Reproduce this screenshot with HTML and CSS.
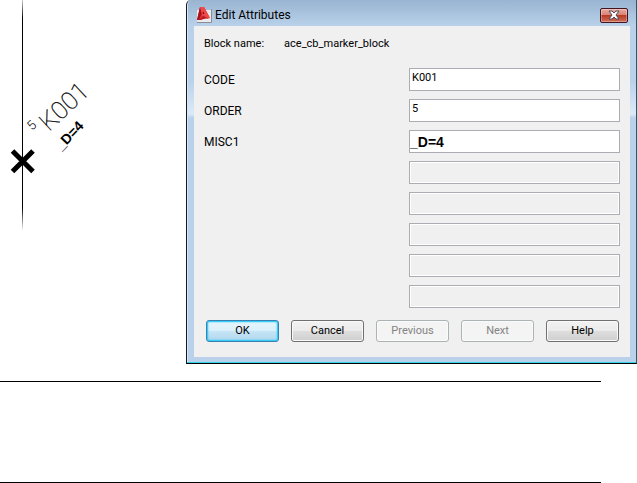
FILE: index.html
```html
<!DOCTYPE html>
<html lang="en">
<head>
    <meta charset="UTF-8">
    <meta name="viewport" content="width=device-width, initial-scale=1.0">
    <title>Edit Attributes</title>
    <link rel="stylesheet" href="styles.css">
</head>
<body>
    <main class="figure">
        <svg class="drawing" width="186" height="240" viewBox="0 0 186 240" role="img" aria-label="Marker block K001">
            <defs>
                <linearGradient id="wire-fade" x1="0" y1="0" x2="0" y2="1">
                    <stop offset="0" stop-color="#000" stop-opacity="0.2"/>
                    <stop offset="0.08" stop-color="#000"/>
                    <stop offset="0.9" stop-color="#000"/>
                    <stop offset="1" stop-color="#000" stop-opacity="0"/>
                </linearGradient>
            </defs>
            <rect x="22" y="0" width="1" height="231" fill="url(#wire-fade)"/>
            <path class="cross" d="M12.500 151 L33 171.500 M33 151 L12.500 171.500"/>
            <text class="marker-order" transform="translate(32 131) rotate(-43)">5</text>
            <text class="marker-code" transform="translate(49 132) rotate(-43)">K001</text>
            <text class="marker-misc" transform="translate(61 151) rotate(-46)">_D=4</text>
        </svg>

        <form class="dialog">
            <header class="titlebar">
                <svg class="app-icon" width="17" height="17" viewBox="0 0 17 17" aria-hidden="true">
                    <path d="M1 3H15V15H1Z" fill="#e9eaec"/>
                    <path d="M15.500 2V15.500H1" fill="none" stroke="#8a8d91"/>
                    <path d="M1 13L4 0H8L14 11L9 10L5 13Z" fill="#d9282f"/>
                    <path d="M1 13L4 0L6 9L4 13Z" fill="#a91219"/>
                    <path d="M4 0H8L14 11L11 12L7 8L3 13L6 7Z" fill="#ee4a4d"/>
                    <path d="M7 4L8.500 7L6.500 7Z" fill="#8e0c12"/>
                    <path d="M7 9L12 11L4 13Z" fill="#bd1820"/>
                </svg>
                <h1>Edit Attributes</h1>
                <button type="button" class="close" aria-label="Close">
                    <svg width="12" height="10" viewBox="0 0 12 10" aria-hidden="true">
                        <path d="M1 1H4L6 3L8 1H11L8 5L11 9H8L6 7L4 9H1L4 5Z" fill="#fff" stroke="#4b4c5c"/>
                    </svg>
                </button>
            </header>

            <div class="content">
                <p class="block-name"><span>Block name:</span><span>ace_cb_marker_block</span></p>

                <div class="fields">
                    <label for="code">CODE</label>
                    <input id="code" type="text" value="K001">
                    <label for="order">ORDER</label>
                    <input id="order" type="text" value="5">
                    <label for="misc1">MISC1</label>
                    <input id="misc1" class="edited" type="text" value="_D=4">
                    <input type="text" aria-label="Attribute 4" disabled>
                    <input type="text" aria-label="Attribute 5" disabled>
                    <input type="text" aria-label="Attribute 6" disabled>
                    <input type="text" aria-label="Attribute 7" disabled>
                    <input type="text" aria-label="Attribute 8" disabled>
                </div>

                <div class="buttons">
                    <button type="button" class="btn default">OK</button>
                    <button type="button" class="btn">Cancel</button>
                    <button type="button" class="btn" disabled>Previous</button>
                    <button type="button" class="btn" disabled>Next</button>
                    <button type="button" class="btn">Help</button>
                </div>
            </div>
        </form>
    </main>

    <div class="rules">
        <hr>
        <hr>
    </div>
</body>
</html>
```

FILE: styles.css
```css
:root {
    --glass: #b9d1ea;
    --face: #f0f0f0;
    --field-border: #abadb3;
}

* {
    margin: 0;
    padding: 0;
    box-sizing: border-box;
}

body {
    background: #fff;
    color: #000;
    font-family: Roboto, Arial, sans-serif;
    font-size: 11px;
    line-height: 14px;
}

.figure {
    display: grid;
    grid-template-columns: 186px 1fr;
}

/* Marker drawing */
.drawing {
    display: block;
}

.cross {
    fill: none;
    stroke: #000;
    stroke-width: 5;
}

.marker-code {
    font: 100 25px Roboto, sans-serif;
    stroke: #000;
    stroke-width: 0.3;
}

.marker-order {
    font: 300 13px Roboto, sans-serif;
}

.marker-misc {
    font: bold 14px "Liberation Sans", sans-serif;
}

/* Dialog window */
.dialog {
    padding: 0 6px 6px 7px;
    border: 1px solid #17616c;
    border-top: 0;
    border-left-color: #111820;
    border-bottom: 1px solid #000;
    border-radius: 5px 0 0 0;
    background: linear-gradient(#99b4d1, var(--glass) 26px, var(--glass) 80px, #dceaf7 114px, var(--glass) 118px);
    box-shadow: inset 0 -1px #37d3ea, inset 1px 0 #d8e8f7;
}

.titlebar {
    display: flex;
    align-items: center;
    height: 26px;
    padding: 6px 2px 2px;
}

.app-icon {
    flex: none;
}

.titlebar h1 {
    flex: 1;
    padding-left: 2px;
    font-weight: normal;
    font-size: 12px;
    line-height: 16px;
}

.close {
    display: flex;
    align-items: center;
    justify-content: center;
    width: 28px;
    height: 15px;
    border: 1px solid #431422;
    border-radius: 2px;
    background: linear-gradient(#e9aaa0, #d98476 45%, #b93a25 50%, #d0705a);
    box-shadow: inset 0 0 0 1px rgba(255, 255, 255, 0.3);
}

.content {
    padding: 11px 10px 15px;
    background: var(--face);
}

.block-name {
    display: flex;
    gap: 20px;
    margin-bottom: 17px;
}

.fields {
    display: grid;
    grid-template-columns: 1fr 211px;
    gap: 8px 0;
    align-items: center;
}

.fields label {
    font-size: 12px;
}

.fields input {
    grid-column: 2;
    width: 100%;
    height: 23px;
    padding: 0 2px 4px;
    border: 1px solid var(--field-border);
    background: #fff;
    font: inherit;
}

.fields input.edited {
    padding: 1px 0 0;
    font: bold 14px "Liberation Sans", Arial, sans-serif;
}

.fields input:disabled {
    background: var(--face);
    box-shadow: inset 0 0 0 1px #fff;
}

.buttons {
    display: flex;
    justify-content: space-between;
    padding: 12px 1px 0 2px;
}

.btn {
    width: 73px;
    height: 22px;
    border: 1px solid #707070;
    border-radius: 3px;
    background: linear-gradient(#f2f2f2, #ebebeb 48%, #dddddd 52%, #cfcfcf);
    box-shadow: inset 0 0 0 1px #fafafa;
    color: #000;
    font: inherit;
}

.btn.default {
    border-color: #3c7fb1;
    background: linear-gradient(#eaf6fd, #d9f0fc 48%, #c6e4f5 52%, #b0d8ee);
    box-shadow: inset 0 0 0 1px #35cdf5, inset 0 0 2px 1px #35cdf5;
}

.btn:disabled {
    border-color: #adb2b5;
    background: #f4f4f4;
    color: #838383;
}

/* Rules under the figure */
.rules {
    display: grid;
    gap: 100px;
    padding: 17px 36px 0 0;
}

.rules hr {
    border: 0;
    border-top: 1px solid #000;
}
```
